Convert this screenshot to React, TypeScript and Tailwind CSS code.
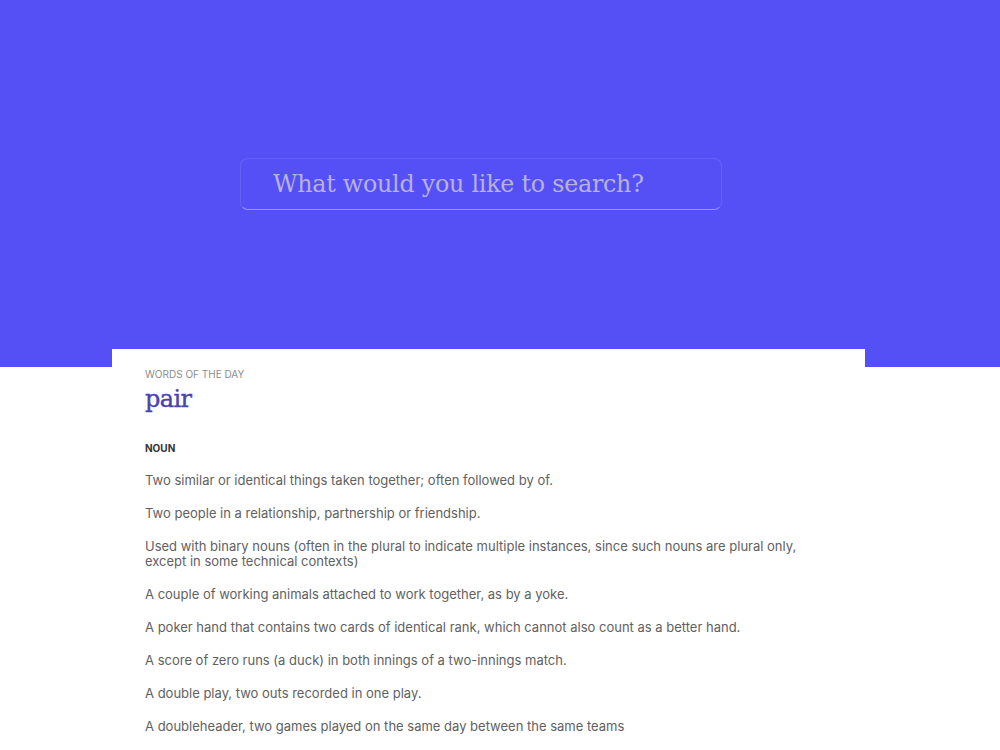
import React from "react";

const definitions: string[] = [
  "Two similar or identical things taken together; often followed by of.",
  "Two people in a relationship, partnership or friendship.",
  "Used with binary nouns (often in the plural to indicate multiple instances, since such nouns are plural only, except in some technical contexts)",
  "A couple of working animals attached to work together, as by a yoke.",
  "A poker hand that contains two cards of identical rank, which cannot also count as a better hand.",
  "A score of zero runs (a duck) in both innings of a two-innings match.",
  "A double play, two outs recorded in one play.",
  "A doubleheader, two games played on the same day between the same teams",
];

const serif = { fontFamily: '"DejaVu Serif", "Liberation Serif", serif' };

export default function App() {
  return (
    <div className="min-h-[750px] bg-white" style={{ fontFamily: 'Inter, "Noto Sans", sans-serif' }}>
      <header className="h-[367px] bg-[#5550f5] pt-[158px]">
        <div className="ml-[240px] w-[482px] h-[52px] rounded-[8px] border border-white/10 border-b-white/40 flex items-center pl-[32px]">
          <input
            className="w-full bg-transparent outline-none text-[23.8px] text-[#b6b2dc] placeholder:text-[#b6b2dc] tracking-[-0.25px] pt-[2px]"
            style={serif}
            placeholder="What would you like to search?"
          />
        </div>
      </header>
      <main className="-mt-[18px] ml-[112px] w-[753px] bg-white px-[33px] pt-[19px] pb-8">
        <p className="text-[10px] uppercase text-[#8c8c8c] leading-[12px]">Words of the day</p>
        <h1 className="text-[24px] font-normal text-[#4a43b0] leading-[32px] mt-[3px] tracking-[-0.6px] [-webkit-text-stroke:0.4px_#4a43b0]" style={serif}>pair</h1>
        <p className="mt-[27px] text-[10px] font-bold text-[#333] leading-[12px]">NOUN</p>
        <div className="mt-[19px] flex flex-col gap-[18px]">
          {definitions.map((d) => (
            <p key={d} className="text-[13px] leading-[15px] text-[#616161] pr-[20px]">{d}</p>
          ))}
        </div>
      </main>
    </div>
  );
}
